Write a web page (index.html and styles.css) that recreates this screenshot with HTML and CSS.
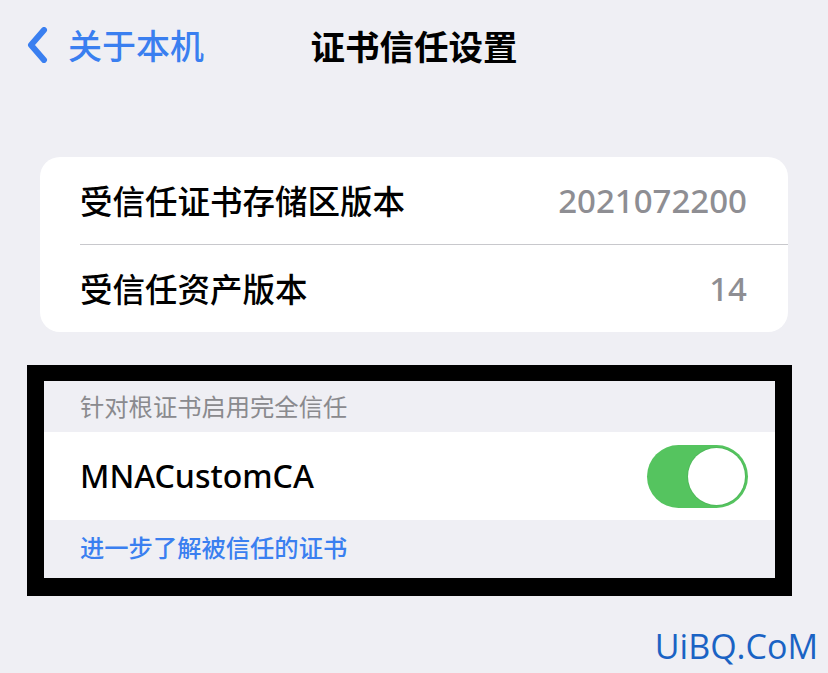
FILE: index.html
```html
<!DOCTYPE html>
<html lang="zh-CN">
<head>
<meta charset="utf-8">
<title>证书信任设置</title>
<link rel="stylesheet" href="styles.css">
</head>
<body>
<div class="page">
  <header class="nav">
    <a class="back">
      <svg class="chev" width="22" height="36" viewBox="0 0 22 36"><path d="M17 3 L4 18 L17 33" fill="none" stroke="#3a7ff0" stroke-width="6" stroke-linecap="round" stroke-linejoin="round"/></svg>
      <span class="back-text">关于本机</span>
    </a>
    <h1 class="title">证书信任设置</h1>
    <span></span>
  </header>

  <section class="card">
    <div class="row sep">
      <span class="label">受信任证书存储区版本</span>
      <span class="value">2021072200</span>
    </div>
    <div class="row">
      <span class="label">受信任资产版本</span>
      <span class="value">14</span>
    </div>
  </section>

  <section class="frame">
    <div class="group-head">针对根证书启用完全信任</div>
    <div class="trow">
      <span class="label latin">MNACustomCA</span>
      <span class="toggle"><span class="knob"></span></span>
    </div>
    <div class="group-foot">进一步了解被信任的证书</div>
  </section>

  <div class="watermark">UiBQ.CoM</div>
</div>
</body>
</html>
```

FILE: styles.css
```css
* { box-sizing: border-box; }
html, body { margin: 0; padding: 0; }
body {
  background: #efeff4;
  font-family: "Noto Sans CJK SC", "Noto Sans", sans-serif;
  width: 828px;
  height: 673px;
  overflow: hidden;
}
.page { position: relative; height: 673px; }

.nav {
  height: 90px;
  display: grid;
  grid-template-columns: 1fr auto 1fr;
  align-items: center;
}
.back {
  display: flex;
  align-items: center;
  padding-left: 27px;
  color: #3a7ff0;
}
.chev { display: block; margin-right: 19px; }
.back-text { font-size: 34px; font-weight: 500; line-height: 1; }
.title {
  margin: 0;
  font-size: 34.5px;
  font-weight: 700;
  color: #000;
  line-height: 1;
}

.card {
  margin: 67px 40px 0 40px;
  background: #fff;
  border-radius: 20px;
}
.row {
  display: flex;
  align-items: center;
  justify-content: space-between;
  height: 88px;
  margin-left: 40px;
  padding-right: 41px;
}
.row.sep { border-bottom: 1.5px solid #c8c8cc; }
.row + .row { height: 87px; }
.label {
  font-size: 32.5px;
  font-weight: 500;
  color: #000;
  line-height: 1;
}
.value {
  font-family: "Noto Sans", sans-serif;
  font-size: 33px;
  font-weight: 500;
  color: #8e8e93;
  line-height: 1;
}

.frame {
  margin: 33px 0 0 27px;
  width: 765px;
  border: 17px solid #000;
  border-top-width: 16px;
  border-bottom-width: 18px;
}
.group-head {
  height: 51px;
  padding-left: 36px;
  display: flex;
  align-items: center;
  font-size: 24.3px;
  color: #8a8a8e;
  line-height: 1;
}
.trow {
  height: 88px;
  background: #fff;
  display: flex;
  align-items: center;
  justify-content: space-between;
  padding-left: 36px;
  padding-right: 27px;
}
.latin { font-family: "Noto Sans", sans-serif; font-size: 32px; }
.toggle {
  width: 101px;
  height: 63px;
  border-radius: 32px;
  background: #55c45f;
  display: flex;
  align-items: center;
  justify-content: flex-end;
  padding-right: 3px;
}
.knob {
  width: 57px;
  height: 57px;
  border-radius: 50%;
  background: #fff;
  box-shadow: 0 0 0 1px #4fb95a;
}
.group-foot {
  height: 58px;
  padding-left: 36px;
  padding-bottom: 4px;
  display: flex;
  align-items: center;
  font-size: 24.3px;
  color: #3a7ff0;
  font-weight: 500;
  line-height: 1;
}

.watermark {
  position: absolute;
  right: 10px;
  top: 626px;
  font-family: "Open Sans", sans-serif;
  font-size: 34px;
  color: #1a63c4;
  line-height: 1.2;
}
```
